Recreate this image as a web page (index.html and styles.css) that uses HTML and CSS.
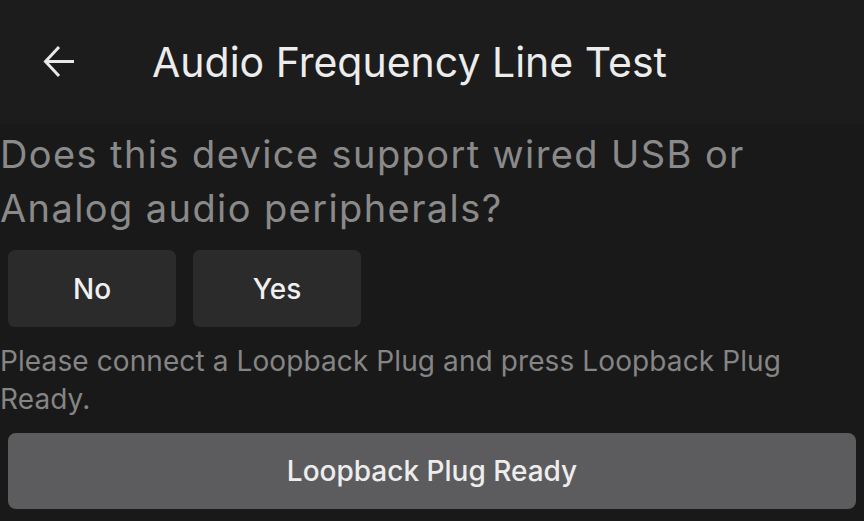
FILE: index.html
```html
<!DOCTYPE html>
<html lang="en">
<head>
  <meta charset="UTF-8">
  <title>Audio Frequency Line Test</title>
  <meta name="viewport" content="width=device-width, initial-scale=1.0">
  <link rel="stylesheet" href="styles.css">
</head>
<body>

<div class="topbar">
  <button class="back-btn" aria-label="Back">
    <svg width="36" height="36" viewBox="0 0 36 36">
      <path d="M33 17.5H6M18 3L4.5 17.5 18 32" fill="none" stroke="#e8e8e8" stroke-width="3"/>
    </svg>
  </button>
  <h1>Audio Frequency Line Test</h1>
</div>

<div class="content">
  <p class="question">Does this device support wired USB or Analog audio peripherals?</p>

  <div class="answers">
    <button class="btn-small">No</button>
    <button class="btn-small">Yes</button>
  </div>

  <p class="info">Please connect a Loopback Plug and press Loopback Plug Ready.</p>

  <button class="btn-wide">Loopback Plug Ready</button>
</div>

</body>
</html>
```

FILE: styles.css
```css
body {
  font-family: Inter, Roboto, 'Liberation Sans', sans-serif;
  background: #191919;
  margin: 0;
  color: #e8e8e8;
}

.topbar {
  display: flex;
  align-items: center;
  height: 124px;
  background: #1c1c1c;
}

.back-btn {
  width: 36px;
  height: 36px;
  margin-left: 41px;
  padding: 0;
  border: none;
  background: none;
  display: flex;
}

.topbar h1 {
  margin: 0 0 0 75px;
  font-size: 41px;
  font-weight: 400;
  color: #ececec;
}

.content {
  padding: 0 8px;
}

.question {
  margin: 3px 0 0 -8px;
  font-size: 38px;
  letter-spacing: 1.4px;
  line-height: 54px;
  font-weight: 400;
  color: #8a8a8a;
}

.answers {
  display: flex;
  gap: 17px;
  margin-top: 15px;
}

.btn-small {
  width: 168px;
  height: 77px;
  border: none;
  border-radius: 7px;
  background: #2b2b2b;
  color: #f0f0f0;
  font-family: inherit;
  font-size: 28px;
  font-weight: 500;
}

.info {
  margin: 15px 0 0 -8px;
  font-size: 28px;
  letter-spacing: 0.1px;
  line-height: 38px;
  color: #858585;
}

.btn-wide {
  display: block;
  width: 100%;
  height: 76px;
  margin-top: 15px;
  border: none;
  border-radius: 8px;
  background: #5c5c5e;
  color: #ededed;
  font-family: inherit;
  font-size: 28px;
  font-weight: 500;
}
```
